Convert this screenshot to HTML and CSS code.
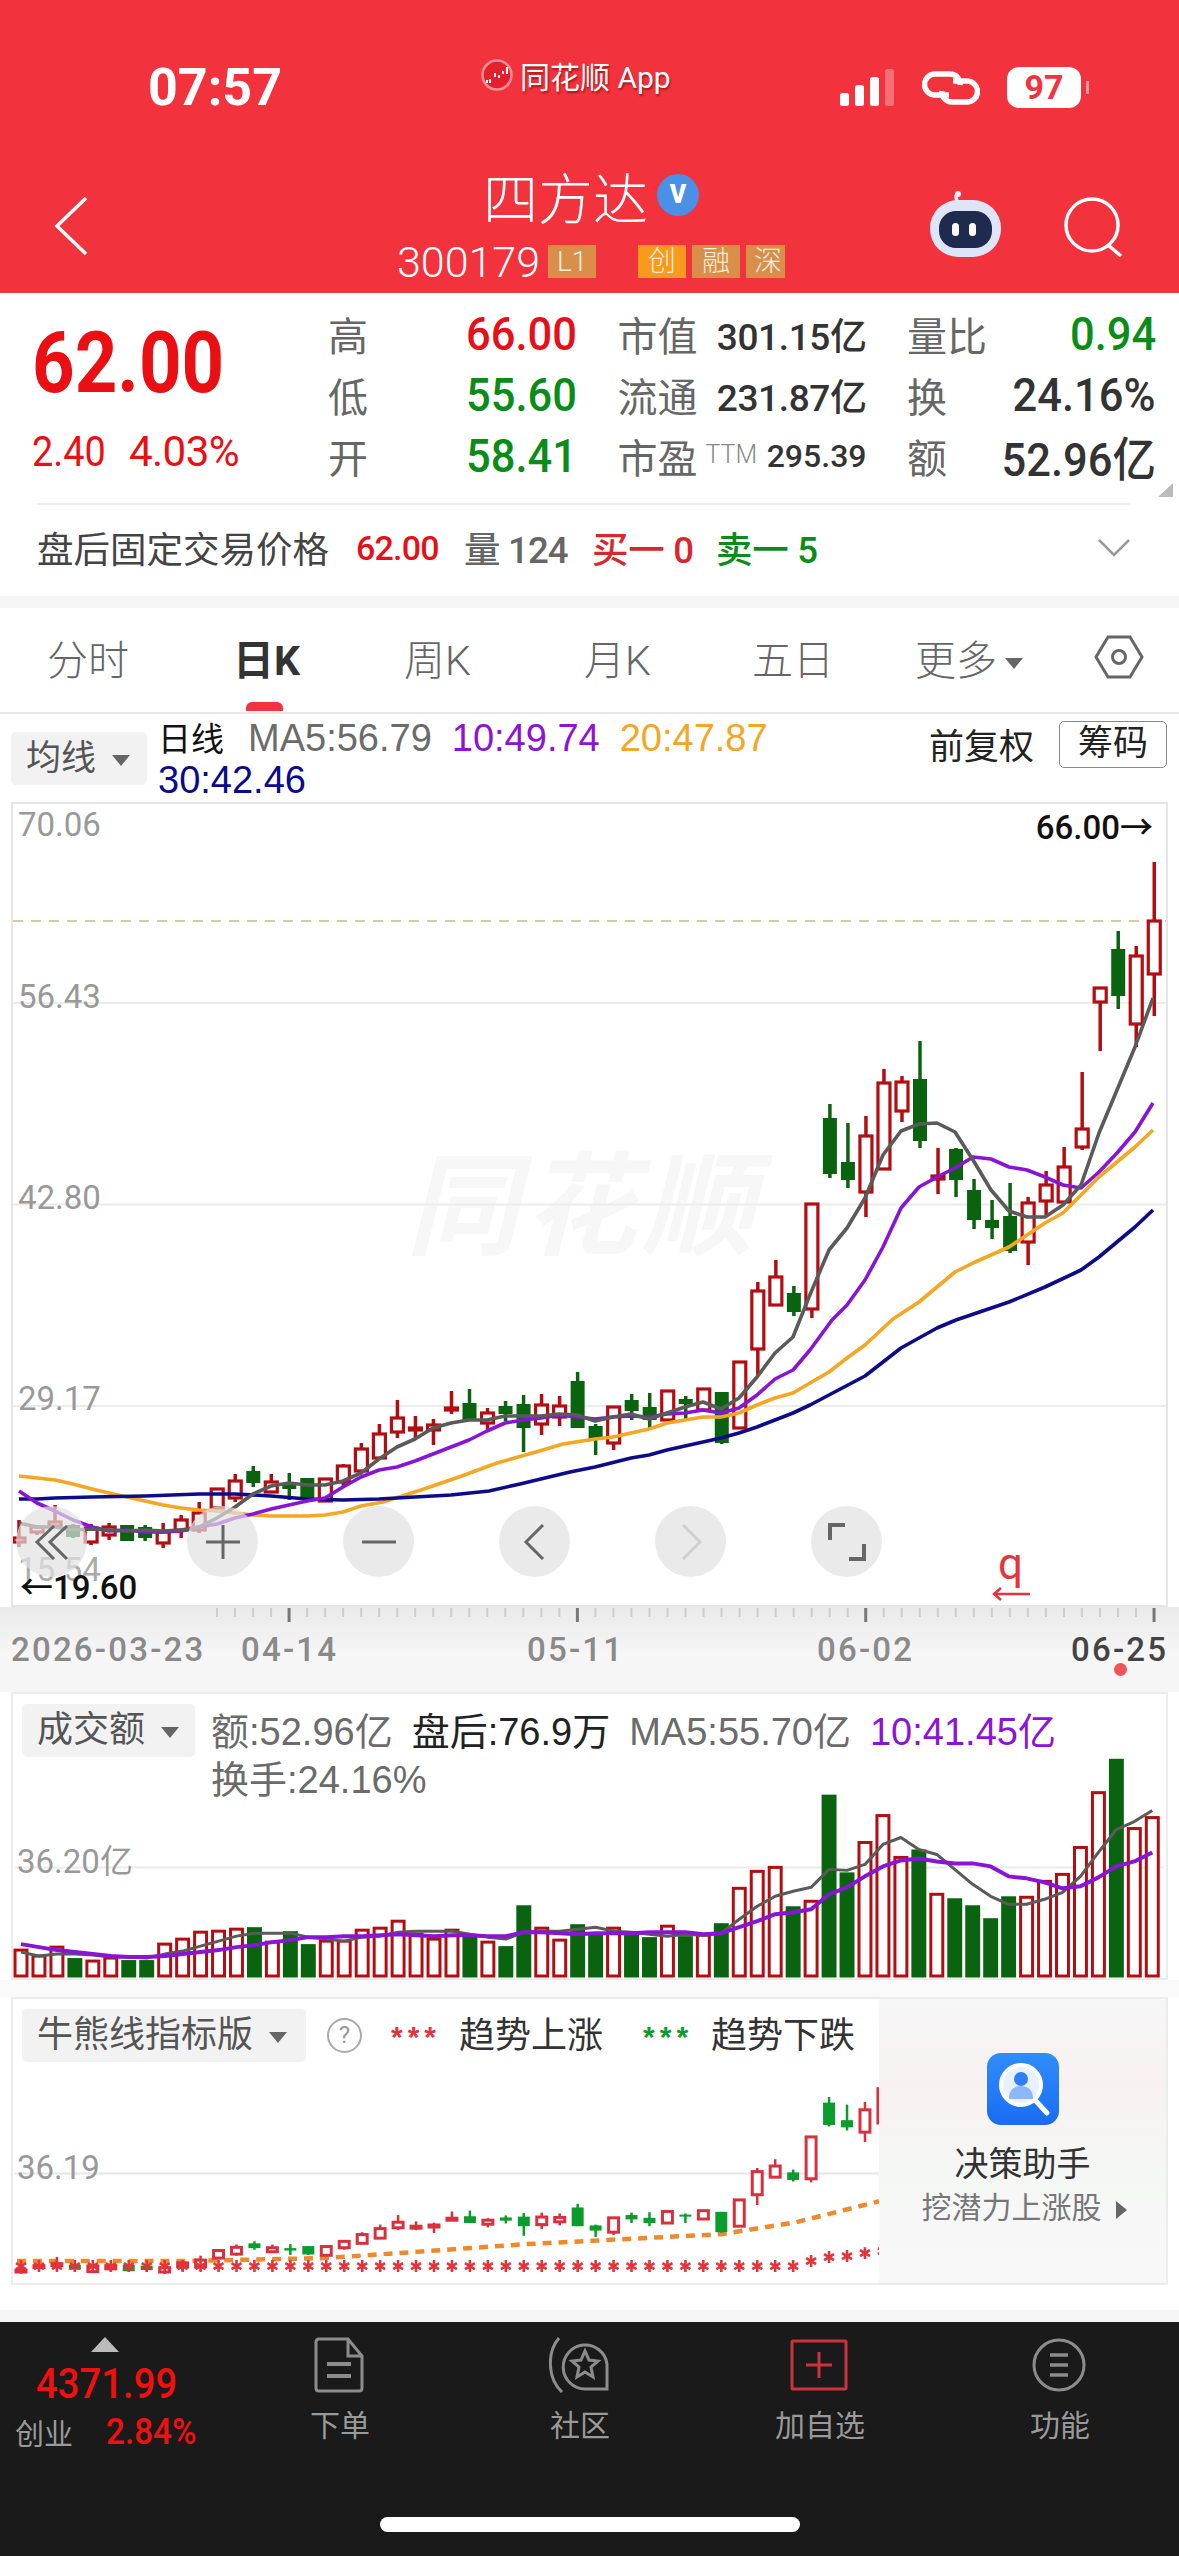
FILE: index.html
```html
<!DOCTYPE html>
<html lang="zh-CN">
<head>
    <meta charset="UTF-8">
    <meta name="viewport" content="width=device-width, initial-scale=1.0">
    <title>四方达 日K</title>
    <link rel="stylesheet" href="styles.css">
</head>
<body>
    <header class="topbar">
        <div class="status">
            <span class="clock">07:57</span>
            <span class="carrier">
                <svg width="32" height="32" viewBox="0 0 32 32"><circle cx="16" cy="16" r="14.5" fill="#e3202c" stroke="#fb8f96" stroke-width="2.5"/><path d="M6 21v3M9 20v4M14 14v4M18 16v3M22 12v3M26 8v7" stroke="#fff" stroke-width="2" fill="none"/></svg>
                同花顺 App
            </span>
            <svg class="signal" width="55" height="37" viewBox="0 0 55 37"><rect x="0" y="24" width="9" height="13" rx="2.5" fill="#fff"/><rect x="15" y="16" width="9" height="21" rx="2.5" fill="#fff"/><rect x="30" y="8" width="9" height="29" rx="2.5" fill="#fff"/><rect x="45" y="0" width="9" height="37" rx="2.5" fill="#fff" opacity=".3"/></svg>
            <svg class="link" width="58" height="34" viewBox="0 0 58 34" fill="none" stroke="#fff" stroke-width="5.500"><path d="M27 24H13a10 10 0 0 1 0-21h15a10 10 0 0 1 10 11"/><path d="M31 10h14a10 10 0 0 1 0 21H30a10 10 0 0 1-10-11"/></svg>
            <span class="battery">97</span>
        </div>
        <nav class="nav">
            <svg class="back" width="34" height="60" viewBox="0 0 34 60" fill="none" stroke="#fff" stroke-width="3.500"><path d="M32 2 3 30l29 28"/></svg>
            <div class="title-block">
                <div class="title"><span>四方达</span><i class="vbadge">V</i></div>
                <div class="code-row">
                    <span class="code">300179</span>
                    <span class="tag tag-l1">L1</span>
                    <span class="tag tag-orange">创</span>
                    <span class="tag">融</span>
                    <span class="tag tag-cut">深</span>
                </div>
            </div>
            <div class="nav-right">
                <svg width="71" height="66" viewBox="0 0 71 66"><path d="M27 10c-2-5-1-7 2-8" fill="none" stroke="#e8ecf8" stroke-width="3.500"/><circle cx="28" cy="3" r="3" fill="#e8ecf8"/><rect x="0" y="9" width="71" height="57" rx="28" fill="#dfe5f8"/><rect x="9" y="20" width="53" height="37" rx="17" fill="#1e2a4e"/><rect x="22" y="32" width="7" height="13" rx="3.500" fill="#fff"/><rect x="39" y="32" width="7" height="13" rx="3.500" fill="#fff"/></svg>
                <svg class="search" width="60" height="60" viewBox="0 0 60 60" fill="none" stroke="#fff" stroke-width="3.500"><circle cx="28" cy="28" r="26"/><path d="M44 48l13 11"/></svg>
            </div>
        </nav>
    </header>

    <section class="quote">
        <div class="quote-main">
            <div class="price">
                <div class="last">62.00</div>
                <div class="change"><span class="chg-abs">2.40</span><span class="chg-pct">4.03%</span></div>
            </div>
            <div class="stats">
                <div class="stat"><label>高</label><b class="val up">66.00</b></div>
                <div class="stat"><label>市值</label><b class="val-sm">301.15亿</b></div>
                <div class="stat"><label>量比</label><b class="val down">0.94</b></div>
                <div class="stat"><label>低</label><b class="val down">55.60</b></div>
                <div class="stat"><label>流通</label><b class="val-sm">231.87亿</b></div>
                <div class="stat"><label>换</label><b class="val">24.16%</b></div>
                <div class="stat"><label>开</label><b class="val down">58.41</b></div>
                <div class="stat"><label>市盈<sup>TTM</sup></label><b class="val-xs">295.39</b></div>
                <div class="stat"><label>额</label><b class="val">52.96亿</b></div>
            </div>
            <i class="corner"></i>
        </div>
        <div class="after-hours">
            <span class="ah-title">盘后固定交易价格</span>
            <span class="ah-price">62.00</span>
            <span class="ah-vol">量 124</span>
            <span class="ah-buy">买一 0</span>
            <span class="ah-sell">卖一 5</span>
            <svg class="ah-more" width="32" height="18" viewBox="0 0 32 18" fill="none" stroke="#999" stroke-width="2.500"><path d="M1 1l15 15L31 1"/></svg>
        </div>
    </section>

    <div class="band"></div>

    <div class="tabs">
        <span class="tab">分时</span>
        <span class="tab active">日K</span>
        <span class="tab">周K</span>
        <span class="tab">月K</span>
        <span class="tab">五日</span>
        <span class="tab">更多<i class="caret"></i></span>
        <svg class="hex" width="50" height="44" viewBox="0 0 50 44" fill="none" stroke="#666" stroke-width="3"><path d="M14 2h22l12 20-12 20H14L2 22z"/><circle cx="25" cy="22" r="6.500"/></svg>
    </div>

    <div class="ma-bar">
        <span class="pick pick-ma">均线<i class="caret"></i></span>
        <div class="ma-text">
            <span class="ma-kind">日线</span><span class="c-gray">MA5:56.79</span><span class="c-purple">10:49.74</span><span class="c-orange">20:47.87</span><br>
            <span class="c-navy">30:42.46</span>
        </div>
        <span class="adjust">前复权</span>
        <span class="chips">筹码</span>
    </div>

    <div class="kline">
        <svg id="kline" class="chart-svg" viewBox="13 804 1153 801"></svg>
        <span class="watermark">同花顺</span>
        <span class="ylabel y1">70.06</span>
        <span class="ylabel y2">56.43</span>
        <span class="ylabel y3">42.80</span>
        <span class="ylabel y4">29.17</span>
        <span class="ylabel y5">15.54</span>
        <span class="hi-mark">66.00→</span>
        <span class="lo-mark">←19.60</span>
        <span class="q-mark">q</span>
        <svg class="q-arrow" width="38" height="14" viewBox="0 0 38 14" fill="none" stroke="#e8333a" stroke-width="2.500"><path d="M38 7H2M9 1 2 7l7 6"/></svg>
        <div class="zoom-btns">
            <span class="zbtn zbtn-first"><svg width="36" height="36" viewBox="0 0 36 36" fill="none" stroke="#666" stroke-width="3"><path d="M20 2 3 18l17 17M33 2 16 18l17 17"/></svg></span>
            <span class="zbtn"><svg width="36" height="36" viewBox="0 0 36 36" fill="none" stroke="#666" stroke-width="3"><path d="M18 1v34M1 18h34"/></svg></span>
            <span class="zbtn"><svg width="36" height="36" viewBox="0 0 36 36" fill="none" stroke="#666" stroke-width="3"><path d="M1 18h34"/></svg></span>
            <span class="zbtn"><svg width="36" height="36" viewBox="0 0 36 36" fill="none" stroke="#666" stroke-width="3"><path d="M26 1 9 18l17 17"/></svg></span>
            <span class="zbtn"><svg width="36" height="36" viewBox="0 0 36 36" fill="none" stroke="#cfcfcf" stroke-width="3"><path d="M10 1l17 17-17 17"/></svg></span>
            <span class="zbtn"><svg width="38" height="38" viewBox="0 0 38 38" fill="none" stroke="#666" stroke-width="4"><path d="M2 17V2h15M36 21v15H21"/></svg></span>
        </div>
    </div>

    <div class="axis">
        <svg id="ticks" class="ticks" viewBox="0 0 1179 16" width="1179" height="16"></svg>
        <div class="dates">
            <span>2026-03-23</span>
            <span>04-14</span>
            <span>05-11</span>
            <span>06-02</span>
            <span class="date-now">06-25</span>
        </div>
        <i class="today"></i>
    </div>

    <div class="panel panel-vol">
        <svg id="volume" class="chart-svg" viewBox="13 1694 1153 285"></svg>
        <div class="panel-head">
            <span class="pick pick-vol">成交额<i class="caret"></i></span>
            <div class="vol-text">
                <span class="c-gray">额:52.96亿</span><span class="c-dark">盘后:76.9万</span><span class="c-gray">MA5:55.70亿</span><span class="c-purple">10:41.45亿</span><br>
                <span class="c-gray">换手:24.16%</span>
            </div>
        </div>
        <span class="ylabel y-vol">36.20亿</span>
    </div>

    <div class="panel-gap"></div>

    <div class="panel panel-bull">
        <svg id="bull" class="chart-svg" viewBox="13 1999 1153 285"></svg>
        <div class="panel-head">
            <span class="pick pick-bull">牛熊线指标版<i class="caret"></i></span>
            <span class="help">?</span>
            <span class="stars up-star">***</span><span class="trend">趋势上涨</span>
            <span class="stars down-star">***</span><span class="trend">趋势下跌</span>
        </div>
        <span class="ylabel y-bull">36.19</span>
        <aside class="promo">
            <svg width="72" height="72" viewBox="0 0 72 72"><defs><linearGradient id="promoBg" x1="0" y1="0" x2="0" y2="1"><stop offset="0" stop-color="#2f8dfb"/><stop offset="1" stop-color="#1a6cf2"/></linearGradient></defs><rect width="72" height="72" rx="14" fill="url(#promoBg)"/><circle cx="34" cy="32" r="20" fill="#e8f1ff" stroke="#fff" stroke-width="4"/><circle cx="34" cy="26" r="7" fill="#2f80f5"/><path d="M22 46c0-10 6-13 12-13s12 3 12 13z" fill="#8cb8f7"/><path d="M48 47l12 13" stroke="#fff" stroke-width="5" stroke-linecap="round"/></svg>
            <div class="promo-title">决策助手</div>
            <div class="promo-sub">挖潜力上涨股<i class="caret caret-right"></i></div>
        </aside>
    </div>

    <div class="page-end"></div>

    <footer class="dock">
        <div class="dock-row">
            <div class="index">
                <i class="index-up"></i>
                <div class="index-val">4371.99</div>
                <div class="index-row"><span>创业</span><b>2.84%</b></div>
            </div>
            <div class="tool">
                <svg width="50" height="56" viewBox="0 0 50 56" fill="none" stroke="#8c8c8c" stroke-width="3"><path d="M34 2H5Q2 2 2 5v46q0 3 3 3h40q3 0 3-3V19zM34 2v17h14"/><path d="M13 27h24M13 39h24" stroke-width="4"/></svg>
                <span>下单</span>
            </div>
            <div class="tool">
                <svg width="60" height="56" viewBox="0 0 60 56" fill="none" stroke="#8c8c8c" stroke-width="3"><path d="M10 1C-2 15-2 41 13 55"/><path d="M58 27a22 22 0 1 0-22 25h22z"/><path d="M36 14l4 9 9 1-7 6 2 10-8-5-8 5 2-10-7-6 9-1z"/></svg>
                <span>社区</span>
            </div>
            <div class="tool">
                <svg width="58" height="52" viewBox="0 0 58 52" fill="none" stroke="#c8343c" stroke-width="3"><rect x="2" y="2" width="54" height="48" rx="1"/><path d="M29 13v26M16 26h26"/></svg>
                <span>加自选</span>
            </div>
            <div class="tool">
                <svg width="54" height="54" viewBox="0 0 54 54" fill="none" stroke="#8c8c8c" stroke-width="3"><circle cx="27" cy="27" r="25"/><path d="M18 17h18M18 27h18M18 37h18" stroke-width="3.500"/></svg>
                <span>功能</span>
            </div>
        </div>
        <div class="home-bar"></div>
    </footer>

    <script src="chart.js"></script>
</body>
</html>
```

FILE: styles.css
```css
* {
    box-sizing: border-box;
}
body {
    margin: 0;
    width: 1179px;
    height: 2556px;
    overflow: hidden;
    background: #fff;
    color: #333;
    font-family: Roboto, "Noto Sans CJK SC", sans-serif;
}
i {
    font-style: normal;
}

/* Red header */
.topbar {
    height: 293px;
    background: #f2323d;
    color: #fff;
    border-bottom: 2px solid #d9414a;
}
.status {
    height: 130px;
    display: flex;
    align-items: center;
    padding: 44px 0 0 148px;
}
.clock {
    font-size: 52px;
    font-weight: 700;
    width: 133px;
}
.carrier {
    display: flex;
    align-items: center;
    gap: 7px;
    margin: 0 0 24px 200px;
    width: 359px;
    font-size: 30px;
    text-shadow: 1px 2px 2px rgba(120, 0, 0, 0.6);
}
.link {
    margin: 2px 0 0 27px;
}
.battery {
    margin-left: 27px;
    width: 74px;
    height: 41px;
    line-height: 41px;
    border-radius: 12px;
    background: #fff;
    color: #f2323d;
    font-size: 34px;
    font-weight: 700;
    text-align: center;
    position: relative;
}
.battery::after {
    content: "";
    position: absolute;
    right: -8px;
    top: 14px;
    width: 3px;
    height: 13px;
    background: rgba(255, 255, 255, 0.5);
}
.nav {
    height: 161px;
    display: grid;
    grid-template-columns: 1fr auto 1fr;
    padding: 0 55px 0 58px;
}
.back {
    margin: 66px 0 0 -4px;
}
.title {
    margin-top: 33px;
    display: flex;
    align-items: center;
    gap: 9px;
    justify-content: center;
    height: 64px;
    font-size: 55px;
    font-weight: 300;
}
.vbadge {
    width: 42px;
    height: 42px;
    border-radius: 50%;
    background: #4a90e6;
    font-size: 25px;
    font-weight: 900;
    text-align: center;
    line-height: 42px;
}
.code-row {
    display: flex;
    align-items: center;
    gap: 6px;
    height: 33px;
    margin-top: 18px;
}
.code {
    font-size: 43px;
    font-weight: 300;
    margin-right: 2px;
}
.tag {
    width: 48px;
    height: 33px;
    line-height: 33px;
    text-align: center;
    font-size: 28px;
    font-weight: 300;
    background: #d98e4a;
    color: #fbeedd;
    overflow: hidden;
}
.tag-l1 {
    margin-right: 36px;
}
.tag-orange {
    background: #f79a1d;
}
.tag-cut {
    width: 39px;
    text-align: left;
    padding-left: 8px;
}
.nav-right {
    display: flex;
    justify-content: flex-end;
    align-items: flex-start;
    gap: 63px;
    padding-top: 61px;
}
.search {
    margin-top: 6px;
}

/* Quote block */
.quote {
    height: 300px;
}
.quote-main {
    height: 210px;
    display: flex;
    position: relative;
    padding: 10px 22px 0 32px;
}
.price {
    width: 297px;
    color: #ea0f12;
}
.last {
    font-size: 85px;
    font-weight: 700;
    line-height: 100px;
    margin-top: 10px;
    transform: scaleX(0.875);
    transform-origin: left center;
}
.change {
    display: flex;
    margin-top: 16px;
    font-size: 43px;
    line-height: 44px;
}
.chg-abs {
    width: 97px;
    transform: scaleX(0.88);
    transform-origin: left center;
}
.chg-pct {
    letter-spacing: -0.6px;
    transform: scaleX(0.98);
    transform-origin: left center;
}
.stats {
    width: 827px;
    display: grid;
    grid-template-columns: repeat(3, 248px);
    grid-auto-rows: 61px;
    column-gap: 41.5px;
}
.stat {
    display: flex;
    justify-content: space-between;
    align-items: center;
}
.stat label {
    font-size: 40px;
    color: #666;
    margin-left: -1px;
}
.stat sup {
    font-size: 25px;
    color: #888;
    margin-left: 8px;
    vertical-align: 10px;
    line-height: 0;
    font-weight: 300;
}
.val {
    font-size: 47px;
    font-weight: 500;
    color: #333;
    transform: scaleX(0.925);
    transform-origin: right center;
}
.val-sm {
    font-size: 37px;
    font-weight: 500;
    letter-spacing: -0.4px;
}
.val-xs {
    font-size: 32px;
    font-weight: 500;
}
.val.up {
    color: #e5101a;
}
.val.down {
    color: #0a8c18;
}
.corner {
    position: absolute;
    right: 6px;
    top: 190px;
    width: 0;
    height: 0;
    border-style: solid;
    border-width: 0 0 14px 15px;
    border-color: transparent transparent #bbb transparent;
}
.after-hours {
    margin: 0 49px 0 37px;
    height: 87px;
    border-top: 2px solid #efefef;
    display: flex;
    align-items: center;
    position: relative;
    font-size: 36.5px;
}
.ah-title {
    color: #444;
    width: 319px;
}
.ah-price {
    width: 108px;
    font-size: 34px;
    font-weight: 500;
    letter-spacing: -0.8px;
    color: #e5101a;
}
.ah-vol {
    width: 128px;
    color: #666;
    font-weight: 500;
    letter-spacing: -0.8px;
}
.ah-buy {
    width: 124px;
    color: #d9272e;
    font-weight: 500;
    letter-spacing: -0.3px;
}
.ah-sell {
    color: #0a8c18;
    font-weight: 500;
    letter-spacing: -0.3px;
}
.ah-more {
    margin-left: auto;
}
.band {
    height: 12px;
    margin-top: 3px;
    background: #f5f5f5;
}

/* Tabs */
.tabs {
    height: 109px;
    margin-top: -3px;
    display: grid;
    grid-template-columns: 186px 171px 180px 168px 163px 177px auto;
    align-items: center;
    padding: 0 0 0 47px;
    border-bottom: 2px solid #e8e8e8;
    font-size: 41px;
    color: #666;
}
.tab {
    font-weight: 300;
    margin-top: -4px;
    white-space: nowrap;
}
.tab.active {
    color: #333;
    font-weight: 700;
    position: relative;
}
.tab.active::after {
    content: "";
    position: absolute;
    left: 13px;
    top: 75px;
    width: 37px;
    height: 9px;
    border-radius: 6px 6px 0 0;
    background: #f2323d;
}
.caret {
    display: inline-block;
    width: 0;
    height: 0;
    margin-left: 8px;
    vertical-align: middle;
    border-style: solid;
    border-width: 11px 9px 0 9px;
    border-color: #666 transparent transparent transparent;
}
.caret-right {
    border-width: 9px 0 9px 11px;
    border-color: transparent transparent transparent #666;
    margin-left: 14px;
}
.hex {
    margin: -4px 0 0 2px;
}

/* MA legend */
.ma-bar {
    height: 88px;
    position: relative;
    display: flex;
    align-items: flex-start;
    padding-left: 11px;
}
.pick {
    background: #f2f2f2;
    border-radius: 5px;
    height: 53px;
    line-height: 53px;
    font-size: 35px;
    color: #555;
    padding-left: 15px;
    white-space: nowrap;
}
.pick .caret {
    margin-left: 16px;
}
.pick-ma {
    margin-top: 18px;
    width: 136px;
}
.ma-text {
    width: 779px;
    margin-left: 11px;
    font-family: "Liberation Sans", "Noto Sans CJK SC", sans-serif;
    font-size: 38px;
    line-height: 42px;
    padding-top: 2px;
}
.ma-text span {
    margin-right: 20px;
}
.ma-kind {
    color: #111;
    font-family: "Noto Sans CJK SC", sans-serif;
    font-size: 33px;
    margin-right: 24px !important;
}
.c-gray {
    color: #6b6b6b;
}
.c-dark {
    color: #222;
}
.c-purple {
    color: #8e12d8;
}
.c-orange {
    color: #f5a623;
}
.c-navy {
    color: #0a0a8c;
}
.adjust {
    margin: 4px 0 0 -8px;
    font-size: 35px;
    color: #222;
    width: 130px;
}
.chips {
    margin-top: 7px;
    width: 108px;
    height: 47px;
    line-height: 43px;
    border: 1px solid #888;
    border-radius: 5px;
    font-size: 35px;
    text-align: center;
    color: #222;
}

/* Charts */
.kline {
    position: relative;
    height: 805px;
    margin: 0 11px 0 11px;
    border: 2px solid #e6e6e6;
}
.chart-svg {
    display: block;
    width: 100%;
    height: 100%;
}
.watermark {
    position: absolute;
    left: 393px;
    top: 344px;
    font-size: 112px;
    font-weight: 700;
    font-style: italic;
    letter-spacing: 6px;
    line-height: 120px;
    color: #f7f7f7;
    z-index: -1;
}
.ylabel {
    position: absolute;
    left: 5px;
    font-size: 33px;
    line-height: 38px;
    color: #999;
}
.y1 { top: 2px; }
.y2 { top: 174px; }
.y3 { top: 375px; }
.y4 { top: 576px; }
.y5 { top: 747px; color: #aaa; }
.hi-mark {
    position: absolute;
    right: 13px;
    top: 5px;
    font-size: 33px;
    font-weight: 500;
    line-height: 38px;
    color: #111;
}
.lo-mark {
    position: absolute;
    left: 7px;
    top: 769px;
    font-size: 33px;
    font-weight: 500;
    line-height: 30px;
    color: #111;
}
.q-mark {
    position: absolute;
    left: 985px;
    top: 738px;
    font-size: 44px;
    line-height: 44px;
    color: #e8333a;
}
.q-arrow {
    position: absolute;
    left: 979px;
    top: 783px;
}
.zoom-btns {
    position: absolute;
    left: 3px;
    top: 702px;
    display: flex;
    gap: 85px;
}
.zbtn {
    width: 71px;
    height: 71px;
    border-radius: 50%;
    background: rgba(225, 225, 225, 0.7);
    display: flex;
    align-items: center;
    justify-content: center;
}
.zbtn-first {
    margin-right: 15px;
}
.axis {
    position: relative;
    height: 85px;
    background: linear-gradient(#eaeaea, #f6f6f6 55%);
}
.ticks {
    display: block;
}
.dates {
    display: grid;
    grid-template-columns: 230px 286px 290px 254px auto;
    padding: 7px 0 0 11px;
    font-size: 33px;
    font-weight: 500;
    letter-spacing: 2.2px;
    line-height: 40px;
    color: #8a8a8a;
}
.date-now {
    color: #444;
}
.today {
    position: absolute;
    left: 1114px;
    top: 56px;
    width: 13px;
    height: 13px;
    border-radius: 50%;
    background: #f0535a;
}
.panel {
    position: relative;
    margin: 0 11px;
    border: 2px solid #ececec;
    background: #fff;
}
.panel-vol {
    height: 288px;
}
.panel-bull {
    height: 288px;
    overflow: hidden;
}
.panel-head {
    position: absolute;
    left: 9px;
    top: 10px;
    display: flex;
    align-items: flex-start;
}
.pick-vol {
    font-size: 36px;
    width: 173px;
}
.pick-bull {
    font-size: 36px;
    width: 284px;
}
.vol-text {
    margin-left: 16px;
    font-family: "Liberation Sans", "Noto Sans CJK SC", sans-serif;
    font-size: 38px;
    line-height: 48px;
    white-space: nowrap;
    margin-top: 4px;
}
.vol-text span {
    margin-right: 19px;
}
.y-vol {
    left: 4px;
    top: 149px;
}
.y-bull {
    left: 4px;
    top: 150px;
}
.help {
    width: 35px;
    height: 35px;
    margin: 9px 0 0 21px;
    border: 2px solid #aaa;
    border-radius: 50%;
    font-size: 24px;
    line-height: 31px;
    text-align: center;
    color: #999;
}
.stars {
    font-family: "Liberation Sans", sans-serif;
    font-size: 30px;
    font-weight: 700;
    letter-spacing: 5px;
    line-height: 50px;
    margin: 3px 0 0 29px;
}
.up-star {
    color: #e3343c;
}
.down-star {
    color: #0a9c2c;
    margin-left: 40px;
}
.trend {
    margin: 2px 0 0 18px;
    font-size: 36px;
    line-height: 50px;
    color: #333;
}
.promo {
    position: absolute;
    right: 0;
    top: 0;
    width: 287px;
    height: 100%;
    background: linear-gradient(#f7f7f7, #f8f1f1 30%, #f5f7f5 60%, #f8f8f8);
    display: flex;
    flex-direction: column;
    align-items: center;
    padding-top: 54px;
}
.promo-title {
    margin-top: 17px;
    font-size: 34px;
    line-height: 44px;
    color: #333;
}
.promo-sub {
    margin-top: 1px;
    padding-left: 3px;
    font-size: 30px;
    line-height: 42px;
    color: #777;
}

/* Bottom dock */
.page-end {
    height: 37px;
    background: linear-gradient(#fff 25px, #f5f5f5 25px);
}
.dock {
    height: 234px;
    background: #1a1a1a;
}
.dock-row {
    display: flex;
    height: 195px;
}
.index {
    width: 219px;
    padding: 15px 0 0 15px;
}
.index-up {
    display: block;
    width: 0;
    height: 0;
    margin-left: 76px;
    border-style: solid;
    border-width: 0 14px 15px 14px;
    border-color: transparent transparent #bbb transparent;
}
.index-val {
    margin: 8px 0 0 21px;
    font-size: 43px;
    font-weight: 500;
    line-height: 46px;
    color: #f01010;
    white-space: nowrap;
    transform: scaleX(0.89);
    transform-origin: left center;
}
.index-row {
    display: flex;
    align-items: center;
    gap: 33px;
    margin-top: 4px;
    color: #999;
    font-size: 29px;
}
.index-row b {
    font-size: 37px;
    font-weight: 500;
    color: #f01010;
    transform: scaleX(0.9);
    transform-origin: left center;
}
.tool {
    width: 240px;
    display: flex;
    flex-direction: column;
    align-items: center;
    padding-top: 15px;
    color: #999;
    font-size: 30px;
}
.tool svg {
    height: 56px;
}
.tool span {
    margin-top: 12px;
    margin-left: 2px;
    line-height: 42px;
}
.home-bar {
    margin: 0 auto;
    width: 420px;
    height: 15px;
    border-radius: 8px;
    background: #fff;
}
.panel-gap {
    height: 17px;
    background: #fafafa;
}
```

FILE: chart.js
```js
const NS_X = i => 19 + 18.02 * i;
const RED = '#b30d12';
const GREEN = '#0a640f';

// [up?, wick top, body top, body bottom, wick bottom] in page pixels
const candles = [
    [1,1520,1538,1542,1547],[1,1525,1527,1532,1535],[1,1505,1522,1526,1527],[0,1524,1525,1537,1538],
    [1,1524,1528,1542,1545],[1,1523,1527,1535,1540],[0,1525,1525,1541,1541],[0,1525,1527,1538,1541],
    [1,1523,1532,1543,1548],[1,1515,1520,1530,1538],[1,1502,1513,1530,1533],[1,1489,1489,1508,1510],
    [1,1474,1481,1498,1502],[0,1466,1471,1483,1487],[1,1474,1482,1492,1493],[0,1473,1483,1489,1500],
    [0,1478,1478,1499,1500],[1,1479,1479,1501,1502],[1,1464,1466,1482,1487],[1,1443,1449,1471,1472],
    [1,1424,1434,1458,1458],[1,1400,1418,1432,1438],[1,1416,1428,1430,1438],[1,1419,1425,1430,1445],
    [1,1391,1408,1410,1414],[0,1389,1403,1420,1420],[1,1408,1413,1423,1431],[0,1401,1406,1414,1421],
    [0,1395,1404,1428,1452],[1,1394,1405,1424,1435],[1,1396,1406,1417,1426],[0,1372,1381,1428,1428],
    [0,1424,1426,1439,1455],[1,1406,1407,1443,1450],[0,1394,1400,1411,1420],[0,1393,1407,1420,1428],
    [1,1391,1391,1420,1421],[0,1396,1399,1404,1420],[1,1389,1389,1410,1412],[0,1392,1392,1443,1444],
    [1,1362,1362,1428,1429],[1,1282,1291,1349,1375],[1,1260,1277,1305,1305],[0,1286,1293,1312,1316],
    [1,1204,1204,1309,1318],[0,1104,1118,1174,1178],[0,1123,1162,1180,1188],[1,1116,1136,1192,1217],
    [1,1069,1083,1169,1169],[1,1076,1082,1111,1122],[0,1041,1079,1141,1148],[1,1148,1176,1179,1194],
    [0,1148,1149,1180,1197],[0,1179,1190,1220,1229],[0,1200,1220,1228,1239],[0,1183,1216,1251,1253],
    [1,1197,1203,1242,1265],[1,1171,1185,1201,1215],[1,1147,1167,1202,1203],[1,1072,1129,1147,1150],
    [1,988,988,1002,1051],[0,931,949,996,1009],[1,946,956,1024,1047],[1,862,921,974,1016]
];

const maLines = [
    { color: '#f5a623', pts: '19,1476 37,1478 55,1480 73,1484 92,1489 109,1493 127,1497 145,1501 163,1505 181,1508 199,1510 217,1511 235,1513 253,1515 271,1516 289,1516 307,1516 325,1515 343,1512 361,1506 383,1502 421,1490 459,1477 497,1463 536,1452 563,1444 595,1439 613,1437 631,1433 649,1429 667,1423 685,1420 703,1417 721,1417 739,1413 757,1405 775,1398 793,1393 810,1383 829,1372 847,1358 865,1345 893,1319 919,1302 937,1287 955,1272 973,1263 991,1255 1009,1247 1027,1235 1045,1223 1063,1213 1081,1195 1099,1177 1117,1162 1135,1147 1153,1130' },
    { color: '#0c0c8a', pts: '19,1499 37,1499 55,1498 92,1497 145,1496 199,1494 235,1494 271,1496 307,1499 343,1500 379,1499 415,1497 451,1495 489,1491 520,1484 570,1472 595,1467 631,1458 649,1455 667,1450 703,1442 721,1438 739,1433 757,1427 775,1420 793,1413 810,1405 829,1395 865,1376 901,1348 937,1328 956,1320 1009,1302 1045,1287 1081,1270 1099,1257 1117,1242 1135,1227 1153,1210' },
    { color: '#8a14d6', pts: '19,1491 37,1503 55,1511 73,1520 92,1527 109,1531 127,1530 145,1532 163,1532 181,1531 199,1527 217,1524 235,1518 253,1514 271,1509 289,1505 307,1501 325,1498 343,1487 361,1477 379,1470 397,1467 415,1461 433,1454 451,1447 469,1440 487,1431 505,1423 523,1420 541,1418 559,1415 577,1417 595,1419 613,1417 631,1416 649,1417 667,1414 685,1413 703,1410 721,1413 739,1408 757,1395 775,1379 793,1370 810,1350 832,1320 847,1305 865,1280 883,1247 901,1208 919,1187 937,1177 955,1168 973,1157 991,1159 1009,1167 1027,1170 1045,1177 1063,1185 1081,1188 1099,1172 1117,1153 1135,1132 1153,1103' },
    { color: '#5a5a5a', pts: '19,1523 37,1527 55,1527 73,1530 92,1529 109,1530 127,1531 145,1530 163,1531 181,1530 199,1527 217,1518 235,1507 253,1494 271,1486 289,1483 307,1485 325,1485 343,1481 361,1473 379,1459 397,1447 415,1439 433,1428 451,1423 469,1420 487,1420 505,1416 523,1416 541,1416 559,1414 577,1415 595,1421 613,1417 631,1414 649,1419 667,1413 685,1407 703,1402 721,1409 739,1398 757,1377 775,1353 793,1337 809,1297 829,1250 847,1228 865,1198 883,1155 901,1131 919,1124 937,1123 955,1132 973,1160 991,1190 1009,1211 1027,1217 1045,1217 1063,1205 1081,1185 1099,1133 1117,1090 1135,1047 1153,998' }
];

// volume bar tops, same x as the candles
const volTops = [1951,1957,1948,1959,1962,1959,1961,1961,1945,1940,1933,1932,1930,1928,1943,1932,1945,1942,1942,1931,1929,1922,1935,1940,1931,1937,1943,1947,1906,1929,1941,1925,1935,1929,1935,1938,1927,1937,1936,1924,1889,1872,1868,1907,1902,1795,1873,1843,1816,1858,1850,1895,1899,1906,1919,1897,1898,1882,1875,1848,1793,1759,1829,1818];
const volUp = [1,1,1,0,1,1,0,0,1,1,1,1,1,0,1,0,0,1,1,1,1,1,1,1,1,0,1,0,0,1,1,0,0,1,0,0,1,0,1,0,1,1,1,0,1,0,0,1,1,1,0,1,0,0,0,0,1,1,1,1,1,0,1,1];
const volGray = [1953,1957,1955,1955,1956,1958,1958,1959,1955,1952,1947,1942,1937,1934,1934,1934,1938,1940,1942,1938,1937,1933,1932,1932,1932,1935,1938,1940,1933,1932,1932,1930,1928,1932,1933,1935,1937,1935,1936,1934,1920,1907,1897,1892,1888,1870,1871,1865,1845,1838,1850,1855,1870,1885,1897,1905,1905,1900,1893,1877,1853,1830,1822,1811];
const volPurple = [1945,1948,1951,1953,1955,1957,1958,1958,1957,1955,1953,1951,1948,1946,1943,1941,1938,1938,1937,1937,1936,1935,1936,1937,1936,1936,1937,1937,1933,1933,1934,1935,1934,1934,1934,1933,1933,1933,1935,1934,1928,1922,1915,1913,1910,1895,1888,1877,1867,1861,1859,1862,1864,1864,1867,1877,1879,1883,1889,1887,1878,1867,1862,1853];

const line = (x1, y1, x2, y2, color, w) =>
    `<line x1="${x1}" y1="${y1}" x2="${x2}" y2="${y2}" stroke="${color}" stroke-width="${w}"/>`;

function drawCandle(c, x, map, red, green, bodyW, wickW, stroke) {
    const color = c[0] ? red : green;
    const [top, bodyTop, bodyBottom, bottom] = c.slice(1).map(map);
    let s = line(x, top, x, bottom, color, wickW);
    if (c[0]) {
        s += `<rect x="${x - bodyW / 2}" y="${bodyTop}" width="${bodyW}" height="${Math.max(bodyBottom - bodyTop, 2)}" fill="#fff" stroke="${color}" stroke-width="${stroke}"/>`;
    } else {
        s += `<rect x="${x - bodyW / 2 - 1}" y="${bodyTop}" width="${bodyW + 2}" height="${bodyBottom - bodyTop}" fill="${color}"/>`;
    }
    return s;
}

function polyline(pts, color, w) {
    return `<polyline points="${pts}" fill="none" stroke="${color}" stroke-width="${w}" stroke-linejoin="round"/>`;
}

// main K line chart
let kline = line(13, 1003, 1166, 1003, '#ececec', 2) + line(13, 1204.5, 1166, 1204.5, '#ececec', 2) + line(13, 1406, 1166, 1406, '#ececec', 2);
kline += `<line x1="13" y1="921" x2="1166" y2="921" stroke="#d8c8a8" stroke-width="2" stroke-dasharray="10 8"/>`;
candles.forEach((c, i) => { kline += drawCandle(c, NS_X(i), y => y, RED, GREEN, 12, 3.5, 3.2); });
maLines.forEach(m => { kline += polyline(m.pts, m.color, 3.6); });
document.getElementById('kline').innerHTML = kline;

// time axis ticks
let ticks = '';
for (let x = 217; x < 1160; x += 18.02) {
    const major = Math.abs((x - 289) % (18.02 * 16)) < 1;
    ticks += line(x, 1, x, major ? 15 : 10, major ? '#777' : '#ccc', major ? 3 : 2);
}
document.getElementById('ticks').innerHTML = ticks;

// volume panel
let vol = line(13, 1868, 1166, 1868, '#ececec', 2);
volTops.forEach((top, i) => {
    const x = NS_X(i);
    if (volUp[i]) {
        vol += `<rect x="${x - 6}" y="${top}" width="12" height="${1977 - top}" fill="#fff" stroke="${RED}" stroke-width="3"/>`;
    } else {
        vol += `<rect x="${x - 7.5}" y="${top}" width="15" height="${1978.5 - top}" fill="${GREEN}"/>`;
    }
});
const toPts = ys => ys.map((y, i) => `${NS_X(i)},${y}`).join(' ');
vol += polyline(toPts(volGray), '#5a5a5a', 3);
vol += polyline(toPts(volPurple), '#8a14d6', 4);
document.getElementById('volume').innerHTML = vol;

// bull and bear panel
const small = y => 2227 + (y - 1428) * 0.4;
let bull = line(13, 2174, 1166, 2174, '#e6e6e6', 2);
bull += `<polyline points="15,2262 180,2262 323,2259 413,2253 526,2245 722,2235 797,2223 880,2202" fill="none" stroke="#ee8a2c" stroke-width="4.500" stroke-dasharray="9 7"/>`;
candles.forEach((c, i) => { bull += drawCandle(c, NS_X(i), small, '#d8303c', '#0a9c2c', 10, 2.5, 3); });
const starY = i => [2262, 2258, 2257, 2254, 2252][i - 44] || 2267;
for (let i = 0; i < 49; i++) {
    const x = NS_X(i), y = starY(i);
    bull += `<path d="M${x} ${y - 6}v12M${x - 5} ${y - 3}l10 6M${x - 5} ${y + 3}l10-6" stroke="#e3343c" stroke-width="2.600" fill="none"/>`;
}
document.getElementById('bull').innerHTML = bull;
```
